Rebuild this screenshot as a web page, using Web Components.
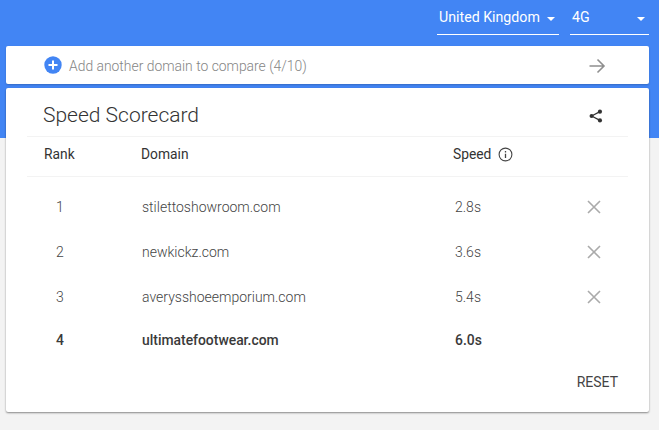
<!DOCTYPE html>
<html><head><meta charset="utf-8">
<style>html,body{margin:0;padding:0}body{width:659px;height:430px;overflow:hidden;font-family:Roboto,sans-serif}</style>
</head><body>
<score-app></score-app>
<script>
function def(name,html){customElements.define(name,class extends HTMLElement{constructor(){super();this.attachShadow({mode:'open'}).innerHTML=html}})}
def('blue-select',`<style>
:host{display:flex;align-items:center;justify-content:space-between;box-sizing:border-box;height:35px;border-bottom:1px solid #fff;color:#fff;font-size:14.200px;padding:0 4px 0 2px;width:var(--w)}
i{width:0;height:0;border:4.500px solid transparent;border-top-color:#fff;border-bottom:0;margin-top:3px}
</style><slot></slot><i></i>`);
def('add-bar',`<style>
:host{display:flex;align-items:center;box-sizing:border-box;height:38px;margin:0 10px 0 6px;background:#fff;border-radius:2px;padding:0 43px 0 38px;color:#858585;font-size:13.900px;font-weight:300;box-shadow:0 1px 2px rgba(0,0,0,.2)}
svg{display:block;flex:none}span{flex:1;margin-left:7px;padding-top:1px}
</style><svg width="18" height="18" viewBox="0 0 18 18"><circle cx="9" cy="9" r="8.700" fill="#4285f4"/><path d="M9 4.500v9M4.500 9h9" stroke="#fff" stroke-width="2"/></svg><span><slot></slot></span>
<svg width="18" height="18" viewBox="0 0 18 18" fill="none" stroke="#8f8f8f" stroke-width="1.600" style="margin-top:2px"><path d="M1.500 9H16M9.500 2.500 16 9l-6.500 6.500"/></svg>`);
def('score-row',`<style>
:host{display:grid;grid-template-columns:115px 313px 1fr 41px;align-items:center;height:var(--h,45px);color:#444;font-size:14px;font-weight:300}
:host([bold]){color:#3a3a3a;font-weight:500;font-size:13.900px}
.r{padding-left:29px}
</style><div class="r"><slot name="rank"></slot></div><div><slot name="domain"></slot></div><div><slot name="speed"></slot></div>
<div><slot name="x"></slot></div>`);
def('x-icon',`<style>:host{display:block;margin-top:1px}svg{display:block}</style><svg width="14" height="14" viewBox="0 0 14 14" stroke="#aaa" stroke-width="1.600"><path d="M1 1l12 12M13 1 1 13"/></svg>`);
def('score-card',`<style>
:host{display:block;box-sizing:border-box;height:324px;margin:4px 10px 0 6px;background:#fff;border-radius:2px;box-shadow:0 1px 2px rgba(0,0,0,.45);padding:0 21px;color:#333}
.top{display:flex;align-items:center;justify-content:space-between;height:49px;padding:5px 25px 0 16px;box-sizing:border-box;border-bottom:1px solid #f3f3f3;font-size:21px;font-weight:300}
.top svg{display:block;margin-top:3px}
.head{display:grid;grid-template-columns:97px 312px 1fr;align-items:center;height:40px;padding:0 0 5px 17px;box-sizing:border-box;border-bottom:1px solid #f3f3f3;font-size:13.800px;color:#333}
.sp{display:flex;align-items:center;gap:7px}.sp svg{display:block}
.rows{padding-top:7px}
.foot{display:flex;justify-content:flex-end;padding:14px 10px 0 0;font-size:14px;color:#444}
</style>
<div class="top"><span>Speed Scorecard</span><svg width="14" height="14" viewBox="0 0 16 16" fill="#333"><circle cx="12.500" cy="3" r="2.400"/><circle cx="12.500" cy="13" r="2.400"/><circle cx="3" cy="8" r="2.400"/><path d="M3 8l9.500-5M3 8l9.500 5" stroke="#333" stroke-width="1.400" fill="none"/></svg></div>
<div class="head"><span>Rank</span><span>Domain</span><span class="sp">Speed <svg width="15" height="15" viewBox="0 0 15 15" fill="none" stroke="#444" stroke-width="1.100"><circle cx="7.500" cy="7.500" r="6.400"/><path d="M7.500 6.700v4.200M7.500 4v1.400" stroke-width="1.300"/></svg></span></div>
<div class="rows"><slot></slot></div>
<div class="foot">RESET</div>`);
def('score-app',`<style>
:host{display:block;height:430px;background:linear-gradient(#4285f4 138px,#f3f3f3 138px)}
.bar{display:flex;justify-content:flex-end;gap:11px;padding-right:10px;height:46px;box-sizing:border-box}
</style>
<div class="bar"><blue-select style="--w:122px">United Kingdom</blue-select><blue-select style="--w:79px">4G</blue-select></div>
<add-bar>Add another domain to compare (4/10)</add-bar>
<score-card>
<score-row><span slot="rank">1</span><span slot="domain">stilettoshowroom.com</span><span slot="speed">2.8s</span><x-icon slot="x"></x-icon></score-row>
<score-row><span slot="rank">2</span><span slot="domain">newkickz.com</span><span slot="speed">3.6s</span><x-icon slot="x"></x-icon></score-row>
<score-row><span slot="rank">3</span><span slot="domain">averysshoeemporium.com</span><span slot="speed">5.4s</span><x-icon slot="x"></x-icon></score-row>
<score-row bold style="--h:41px"><span slot="rank">4</span><span slot="domain">ultimatefootwear.com</span><span slot="speed">6.0s</span></score-row>
</score-card>`);
</script>
</body></html>
